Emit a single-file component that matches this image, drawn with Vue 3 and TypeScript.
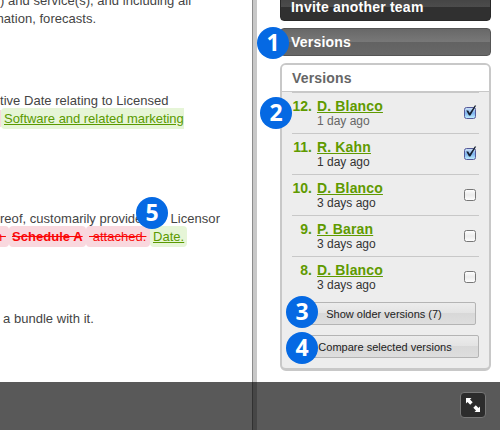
<script setup lang="ts">
import { ref } from 'vue'

interface Version {
  id: number
  author: string
  age: string
  selected: boolean
}

const versions = ref<Version[]>([
  { id: 12, author: 'D. Blanco', age: '1 day ago', selected: true },
  { id: 11, author: 'R. Kahn', age: '1 day ago', selected: true },
  { id: 10, author: 'D. Blanco', age: '3 days ago', selected: false },
  { id: 9, author: 'P. Baran', age: '3 days ago', selected: false },
  { id: 8, author: 'D. Blanco', age: '3 days ago', selected: false },
])

const badges = [1, 2, 3, 4, 5]
</script>

<template>
  <div class="screen">
    <main class="document">
      <div class="para p1">
        <div class="line l1">) and service(s), and including all</div>
        <div class="line l2">mation, forecasts.</div>
      </div>
      <div class="para p2">
        <div class="line l3">tive Date relating to Licensed</div>
        <div class="line l4"><span class="stub"></span><ins class="open">Software and related marketing</ins></div>
      </div>
      <div class="para p3">
        <div class="line l5"><span>reof, customarily provide</span><span class="rest">Licensor</span></div>
        <div class="line l6"><del class="first">n&nbsp;</del><del class="strong">Schedule A</del><del class="third">&nbsp;attached.</del><ins>Date.</ins></div>
      </div>
      <div class="para p4">
        <div class="line l7">a bundle with it.</div>
      </div>
    </main>
    <div class="divider"></div>
    <aside class="sidebar">
      <button class="bar dark">Invite another team</button>
      <button class="bar grey">Versions</button>
      <section class="panel">
        <h2>Versions</h2>
        <ul>
          <li v-for="v in versions" :key="v.id" :class="{ current: v.id === 12 }">
            <span class="num">{{ v.id }}.</span>
            <div class="info">
              <a>{{ v.author }}</a>
              <span class="age">{{ v.age }}</span>
            </div>
            <svg class="check" width="15" height="16" viewBox="0 0 15 16" @click="v.selected = !v.selected">
              <defs>
                <linearGradient id="on" x1="0" y1="0" x2="0" y2="1">
                  <stop offset="0" stop-color="#d3e4f8" />
                  <stop offset=".5" stop-color="#7fb4ee" />
                  <stop offset="1" stop-color="#c3f1ff" />
                </linearGradient>
                <linearGradient id="off" x1="0" y1="0" x2="0" y2="1">
                  <stop offset="0" stop-color="#fff" />
                  <stop offset=".5" stop-color="#ececec" />
                  <stop offset="1" stop-color="#fff" />
                </linearGradient>
              </defs>
              <rect x="1.5" y="3.5" width="11" height="11" rx="2" :fill="v.selected ? 'url(#on)' : 'url(#off)'" :stroke="v.selected ? '#555a9a' : '#777'" />
              <path v-if="v.selected" d="M3.2 6.6 L5.2 6.4 L6.7 8.9 L11.8 1.4 L13.2 1.4 L7.4 11.6 L6 11.6 Z" fill="#152031" />
            </svg>
          </li>
        </ul>
        <button class="action older">Show older versions (7)</button>
        <button class="action">Compare selected versions</button>
      </section>
    </aside>
    <footer class="toolbar">
      <button class="expand" aria-label="Expand">
        <svg width="24" height="24" viewBox="0 0 24 24" fill="#fff">
          <path d="M5 5H10.5L9 6.5L11.7 9.2L9.2 11.7L6.5 9L5 10.5Z" />
          <path d="M19 19H13.5L15 17.5L12.3 14.8L14.8 12.3L17.5 15L19 13.5Z" />
        </svg>
      </button>
    </footer>
    <span v-for="n in badges" :key="n" class="badge" :class="'b' + n">{{ n }}</span>
  </div>
</template>

<style>
body {
  margin: 0;
  overflow: hidden;
}
</style>

<style scoped>
.screen {
  position: relative;
  display: grid;
  grid-template-columns: 252px 5px 243px;
  grid-template-rows: 382px 48px;
  width: 500px;
  height: 430px;
  overflow: hidden;
  background: #fff;
  font-family: "Liberation Sans", Arial, sans-serif;
}
.document {
  overflow: hidden;
  color: #444;
  font-size: 13px;
  letter-spacing: .03px;
  line-height: 18px;
  white-space: nowrap;
}
.line { height: 18px; }
.p1 { margin-top: -8px; }
.p2 { margin-top: 64px; }
.p3 { margin-top: 82px; }
.p4 { margin-top: 64px; }
.l2 { margin-left: -7px; }
.l7 { margin-left: 3px; }
.l4, .l5, .l6 { display: flex; }
.rest { margin-left: auto; margin-right: 32px; }
ins, del {
  box-sizing: border-box;
  height: 21px;
  margin-top: -2px;
  padding: 2px 3px 0;
  border-radius: 4px;
}
ins { background: #e6f5d7; color: #5a9a00; }
ins.open { padding: 2px 0 0 3px; border-radius: 4px 0 0 4px; letter-spacing: -.03px; }
del { background: #f9d8de; color: #fa0808; }
.stub { width: 1px; height: 17px; background: #f9d8de; }
.first { margin-left: -5px; padding: 2px 0 0; width: 14px; }
.strong { width: 77px; font-weight: bold; }
.third { width: 64px; }
.divider {
  grid-row: 1 / 3;
  grid-column: 2;
  box-sizing: border-box;
  border-left: 1px solid #8c8c8c;
  background: #c8c8c8;
}
.sidebar {
  grid-column: 3;
  padding: 0 9px 0 23px;
}
button {
  display: block;
  box-sizing: border-box;
  margin: 0;
  font-family: inherit;
}
.bar {
  width: 211px;
  height: 28px;
  padding: 0 0 0 10px;
  border: 1px solid #555;
  border-radius: 4px;
  color: #fff;
  font-size: 14px;
  font-weight: bold;
  letter-spacing: .22px;
  line-height: 26px;
  text-align: left;
}
.dark {
  margin-top: -7px;
  border-color: #292929;
  background: linear-gradient(#404040 0, #4c4c4c 50%, #303030 50%, #303030);
}
.grey {
  margin-top: 7px;
  background: linear-gradient(#686868 0, #787878 50%, #626262 50%, #686868);
}
.panel {
  box-sizing: border-box;
  width: 211px;
  height: 308px;
  margin-top: 7px;
  border: 2px solid #c8c8c8;
  border-bottom-width: 3px;
  border-radius: 6px;
  background: #ededed;
}
h2 {
  box-sizing: border-box;
  height: 27px;
  margin: 0;
  padding-left: 10px;
  border-bottom: 1px solid #c8c8c8;
  border-radius: 4px 4px 0 0;
  background: #fff;
  color: #666;
  font-size: 14px;
  letter-spacing: .15px;
  line-height: 27px;
}
ul { margin: 0 10px; padding: 0; list-style: none; }
li {
  display: flex;
  box-sizing: border-box;
  height: 41px;
  padding-top: 5px;
  border-top: 1px solid #c8c8c8;
}
.num {
  width: 20px;
  margin-right: 5px;
  color: #5f9a00;
  font-size: 14px;
  font-weight: bold;
  line-height: 16px;
  text-align: right;
}
.info { flex: 1; display: flex; flex-direction: column; align-items: flex-start; }
.info a {
  color: #5f9a00;
  font-size: 14px;
  font-weight: bold;
  letter-spacing: .15px;
  line-height: 16px;
  text-decoration: underline;
}
.age { color: #333; font-size: 12px; line-height: 14px; }
.current .age { color: #666; }
.check { margin: 6px 1px 0 0; }
.action {
  width: 187px;
  height: 23px;
  margin: 10px 0 0 10px;
  padding: 0 1px 0 0;
  border: 1px solid #b4b4b4;
  border-radius: 2px;
  background: linear-gradient(#ececec 0, #e3e3e3 48%, #d8d8d8 48%, #dedede);
  color: #222;
  font-size: 11px;
  line-height: 20px;
  text-align: center;
}
.older { width: 184px; margin-top: 5px; padding: 0; }
.toolbar {
  grid-row: 2;
  grid-column: 1 / 4;
  z-index: 1;
  display: flex;
  justify-content: flex-end;
  padding: 10px 14px 0 0;
  background: rgba(0, 0, 0, .65);
}
.expand {
  width: 26px;
  height: 26px;
  padding: 0;
  border: 1px solid #777;
  border-radius: 4px;
  background: #2c2c2c;
}
.expand svg { display: block; }
.badge {
  position: absolute;
  z-index: 2;
  box-sizing: border-box;
  width: 32px;
  height: 32px;
  border-radius: 50%;
  background: #0569e3;
  color: #fff;
  font: bold 23px/30px "Open Sans", "Noto Sans", sans-serif;
  text-align: center;
}
.b1 { left: 257px; top: 27px; }
.b2 { left: 260px; top: 97px; }
.b3 { left: 286px; top: 296px; }
.b4 { left: 286px; top: 332px; }
.b5 { left: 136px; top: 197px; }
</style>
